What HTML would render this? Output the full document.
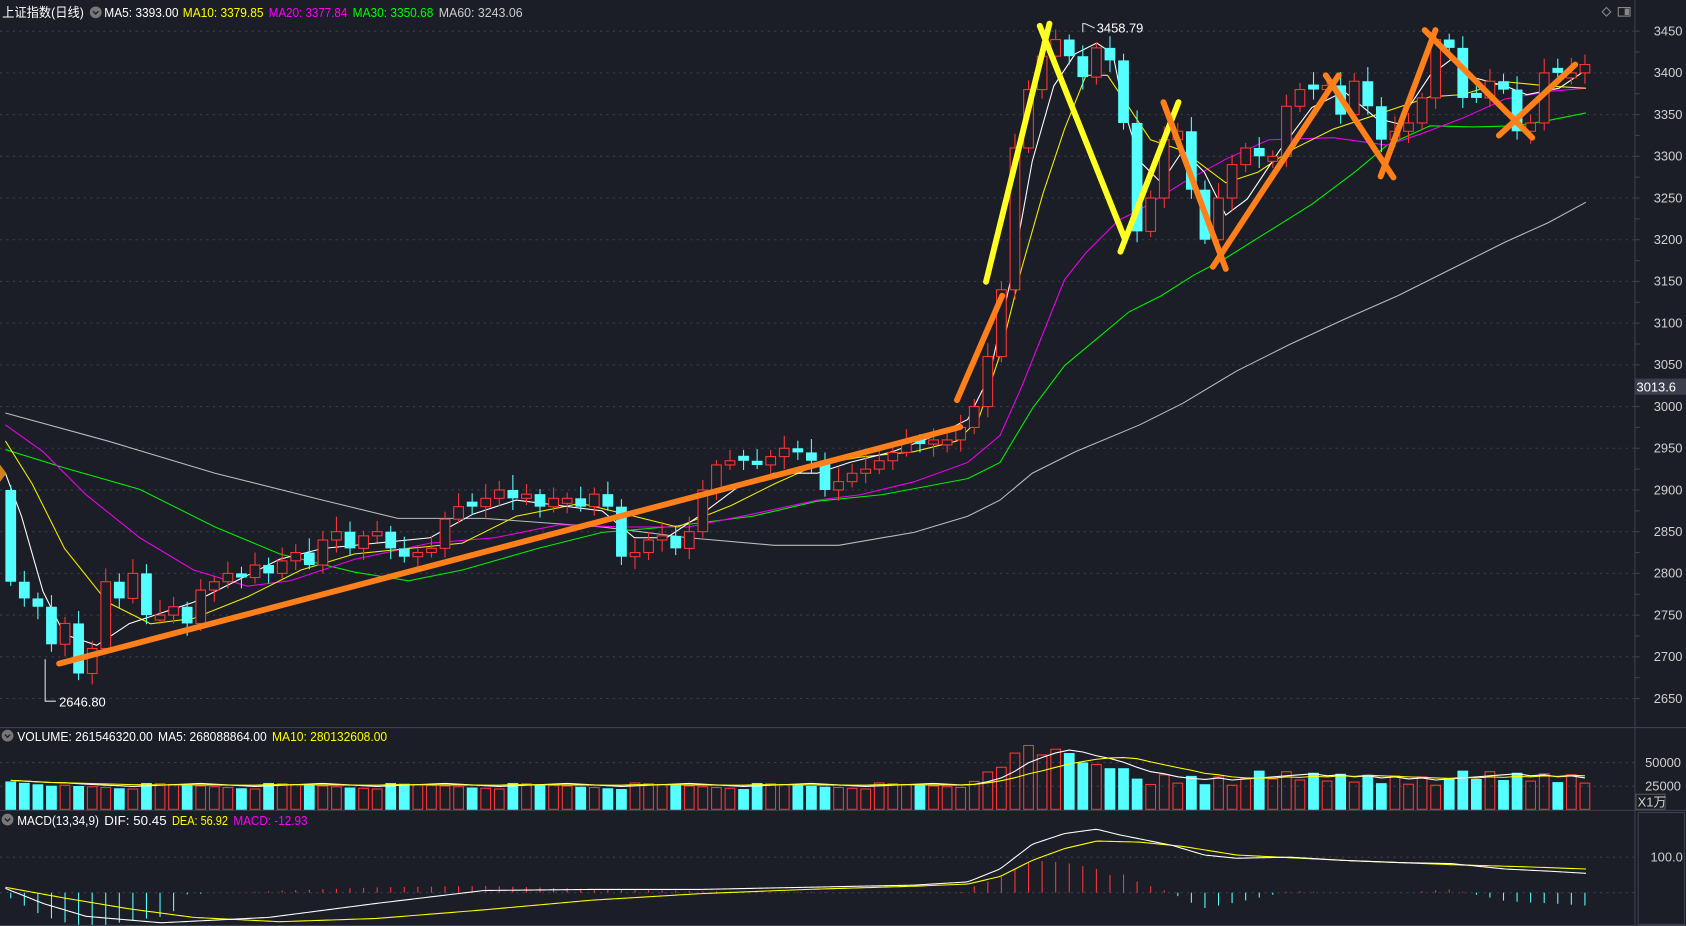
<!DOCTYPE html>
<html><head><meta charset="utf-8"><style>
html,body{margin:0;padding:0;background:#1b1e26;overflow:hidden}
svg{display:block}
text{font-family:"Liberation Sans","Noto Sans CJK SC",sans-serif;font-size:12px}
</style></head><body>
<svg id="s" width="1686" height="926" viewBox="0 0 1568 861" preserveAspectRatio="none" xmlns="http://www.w3.org/2000/svg">
<rect width="1568" height="861" fill="#1b1e26"/>
<g id="grid" stroke="#3a3f4a" stroke-dasharray="2,4" stroke-width="1"></g>
<g id="ma"></g>
<g id="candles"></g>
<g id="vol"></g>
<g id="macd"></g>
<line x1="0" y1="676.5" x2="1568" y2="676.5" stroke="#3c4150"/>
<line x1="0" y1="753.5" x2="1568" y2="753.5" stroke="#3c4150"/>
<line x1="1520.5" y1="0" x2="1520.5" y2="861" stroke="#3c4150"/>
<line x1="0" y1="860.5" x2="1568" y2="860.5" stroke="#3c4150"/>
<rect x="1523.5" y="755.5" width="43" height="104" fill="none" stroke="#3c4150"/>
<g id="ticks" stroke="#3c4150"></g>
<text x="2" y="16" fill="#fff" textLength="76" lengthAdjust="spacingAndGlyphs">上证指数(日线)</text>
<circle cx="89" cy="11.5" r="5.5" fill="#777"/><path d="M86.5 10.5l2.5 2.5 2.5-2.5" stroke="#222" fill="none" stroke-width="1.3"/>
<text x="97" y="16" fill="#fff" textLength="69" lengthAdjust="spacingAndGlyphs">MA5: 3393.00</text>
<text x="170" y="16" fill="#ffff00" textLength="75" lengthAdjust="spacingAndGlyphs">MA10: 3379.85</text>
<text x="250" y="16" fill="#ff00ff" textLength="73" lengthAdjust="spacingAndGlyphs">MA20: 3377.84</text>
<text x="328" y="16" fill="#00ff00" textLength="75" lengthAdjust="spacingAndGlyphs">MA30: 3350.68</text>
<text x="408" y="16" fill="#cccccc" textLength="78" lengthAdjust="spacingAndGlyphs">MA60: 3243.06</text>
<path d="M1490 11l4-4 4 4-4 4z" fill="none" stroke="#888"/>
<rect x="1505" y="7" width="11" height="8" fill="none" stroke="#888"/><rect x="1511" y="8" width="4" height="6" fill="#888"/>
<g id="axis" fill="#d0d0d0"></g>
<rect x="1520" y="352" width="48" height="15" fill="#3a3f4b"/>
<text x="1522" y="364" fill="#fff">3013.6</text>
<text x="55" y="657" fill="#fff">2646.80</text>
<path d="M42 613v39h10" stroke="#ddd" fill="none"/>
<text x="1020" y="30" fill="#fff">3458.79</text>
<path d="M1007 30v-8h2M1009 22l9 4" stroke="#ddd" fill="none"/>
<circle cx="7" cy="684" r="5.5" fill="#777"/><path d="M4.5 683l2.5 2.5 2.5-2.5" stroke="#222" fill="none" stroke-width="1.3"/>
<text x="16" y="689" fill="#fff" textLength="126" lengthAdjust="spacingAndGlyphs">VOLUME: 261546320.00</text>
<text x="147" y="689" fill="#fff" textLength="101" lengthAdjust="spacingAndGlyphs">MA5: 268088864.00</text>
<text x="253" y="689" fill="#ffff00" textLength="107" lengthAdjust="spacingAndGlyphs">MA10: 280132608.00</text>
<text x="1530" y="713" fill="#d0d0d0">50000</text>
<text x="1530" y="735" fill="#d0d0d0">25000</text>
<rect x="1521.5" y="738.5" width="27" height="14" fill="none" stroke="#555"/>
<text x="1523" y="750" fill="#d0d0d0">X1万</text>
<circle cx="7" cy="762" r="5.5" fill="#777"/><path d="M4.5 761l2.5 2.5 2.5-2.5" stroke="#222" fill="none" stroke-width="1.3"/>
<text x="16" y="767" fill="#fff" textLength="76" lengthAdjust="spacingAndGlyphs">MACD(13,34,9)</text>
<text x="97" y="767" fill="#fff" textLength="58" lengthAdjust="spacingAndGlyphs">DIF: 50.45</text>
<text x="160" y="767" fill="#ffff00" textLength="52" lengthAdjust="spacingAndGlyphs">DEA: 56.92</text>
<text x="217" y="767" fill="#ff00ff" textLength="69" lengthAdjust="spacingAndGlyphs">MACD: -12.93</text>
<text x="1535" y="801" fill="#d0d0d0">100.0</text>
<g id="ann" stroke-linecap="round" stroke-width="5.5" fill="none"></g>
<path d="M0 432l6 8-6 8z" fill="#d08020"/>
</svg>
<script>
var NS="http://www.w3.org/2000/svg";
function el(p,t,a){var e=document.createElementNS(NS,t);for(var k in a)e.setAttribute(k,a[k]);document.getElementById(p).appendChild(e);return e;}
function Y(p){return 29+(3450-p)*0.7756;}
for(var p=2650;p<=3450;p+=50){var y=Y(p);el('grid','line',{x1:0,x2:1520,y1:y,y2:y});el('axis','text',{x:1538,y:y+4}).textContent=p;}
[709,731,797,830].forEach(function(y){el('grid','line',{x1:0,x2:1520,y1:y,y2:y});});
for(var p=2650;p<=3450;p+=25){var y=Y(p);el('ticks','line',{x1:1520,x2:1525,y1:y,y2:y});}
function poly(pts,c,g){el(g||'ma','polyline',{points:pts.map(function(a){return a.join(',')}).join(' '),stroke:c,fill:'none','stroke-width':1});}
poly([[5,384],[100,410],[200,440],[300,465],[370,482],[450,482],[560,490],[640,500],[720,507],[780,507],[850,495],[900,480],[930,465],[960,440],[1000,420],[1060,395],[1100,375],[1150,345],[1200,320],[1250,297],[1300,275],[1350,250],[1400,225],[1440,207],[1475,188]],'#bbbbbb');
poly([[5,418],[60,435],[130,455],[200,490],[260,515],[330,532],[380,540],[430,530],[500,510],[560,495],[620,490],[700,480],[760,466],[820,460],[900,445],[930,430],[960,380],[990,340],[1020,315],[1050,290],[1080,275],[1110,256],[1140,240],[1180,215],[1220,190],[1260,160],[1290,135],[1330,117],[1370,118],[1410,117],[1440,112],[1475,105]],'#00ee00');
poly([[5,395],[40,420],[80,460],[130,500],[180,530],[230,545],[270,540],[330,520],[400,505],[460,500],[520,488],[580,490],[640,490],[700,478],[760,465],[800,460],[850,448],[900,430],[930,405],[950,360],[970,310],[990,260],[1010,235],[1030,215],[1040,205],[1060,195],[1100,170],[1140,148],[1180,130],[1240,128],[1290,135],[1320,125],[1360,110],[1400,92],[1440,85],[1475,82]],'#ee00ee');
poly([[5,410],[30,450],[60,510],[100,560],[140,580],[180,575],[230,555],[280,530],[330,515],[380,510],[430,505],[480,480],[540,468],[590,480],[630,490],[680,470],[720,450],[760,432],[800,425],[850,420],[890,410],[910,390],[930,330],[950,250],[970,180],[990,120],[1010,70],[1030,70],[1050,100],[1070,130],[1100,140],[1140,170],[1170,160],[1200,140],[1240,120],[1270,110],[1300,100],[1330,90],[1360,88],[1400,76],[1440,80],[1475,82]],'#eeee00');
poly([[5,440],[20,480],[40,550],[60,590],[90,600],[120,580],[150,570],[180,560],[220,540],[260,520],[300,510],[350,505],[400,500],[440,478],[480,465],[520,470],[560,475],[590,500],[620,500],[650,480],[690,450],[720,440],[760,440],[790,430],[830,420],[870,405],[900,390],[920,350],[940,260],[960,150],[980,80],[1000,50],[1020,40],[1035,50],[1045,100],[1060,150],[1080,170],[1100,140],[1120,160],[1140,200],[1160,185],[1190,140],[1220,100],[1250,85],[1280,110],[1300,115],[1330,70],[1350,55],[1370,72],[1400,80],[1420,88],[1450,82],[1475,65]],'#ffffff');
var C=[2790,2770,2760,2715,2740,2680,2710,2790,2770,2800,2750,2750,2760,2740,2780,2790,2800,2795,2810,2800,2815,2825,2810,2840,2850,2830,2845,2850,2830,2820,2825,2830,2865,2880,2880,2890,2900,2890,2895,2880,2890,2890,2880,2895,2880,2820,2825,2840,2845,2830,2850,2900,2930,2935,2935,2930,2940,2950,2945,2935,2900,2910,2920,2925,2935,2945,2960,2955,2960,2960,2975,3000,3060,3140,3310,3380,3420,3440,3420,3395,3430,3415,3340,3210,3250,3320,3330,3260,3200,3250,3290,3310,3300,3300,3360,3380,3380,3385,3350,3390,3360,3320,3330,3340,3370,3440,3430,3370,3370,3390,3380,3330,3340,3400,3400,3400,3410];
var n=C.length,sp=1464/(n-1),prev=2900,vols=[];
var volSpike={71:30000,72:40000,73:45000,74:60000,75:68000,76:58000,77:64000,78:60000,79:50000,80:48000,81:44000,82:44000,83:33000};
for(var i=0;i<n;i++){var x=10+i*sp,o=prev,c=C[i];if(Math.abs(o-c)<3){o=c+((i%2)?-6:6);}
 var up=c>o,hi=Math.max(o,c)+6+(i*7%13),lo=Math.min(o,c)-5-(i*5%11);
 var col=up?'#ff3535':'#55ffff';
 el('candles','line',{x1:x,x2:x,y1:Y(hi),y2:Y(lo),stroke:col});
 var t=Y(Math.max(o,c)),b=Y(Math.min(o,c));
 if(up)el('candles','rect',{x:x-4.5,y:t,width:9,height:Math.max(b-t,1),fill:'#1b1e26',stroke:col});
 else el('candles','rect',{x:x-5,y:t,width:10,height:Math.max(b-t,1.5),fill:col});
 var v=volSpike[i]||(i<4?30000-i*1500:(i>84?26000+((i*37)%15)*1100:22000+((i*53)%9)*800));
 vols.push(v);var vy=753-v*22/25000;
 if(up)el('vol','rect',{x:x-4.5,y:vy,width:9,height:752.5-vy,fill:'none',stroke:col});
 else el('vol','rect',{x:x-5,y:vy,width:10,height:753-vy,fill:col});
 prev=c;}
function maV(k){var pts=[];for(var i=0;i<n;i++){var s=0,m=0;for(var j=Math.max(0,i-k+1);j<=i;j++){s+=vols[j];m++;}pts.push([10+i*sp,753-(s/m)*22/25000-1]);}return pts;}
poly(maV(5),'#ffffff','vol');poly(maV(10),'#ffff00','vol');
function interp(pts,x){for(var i=1;i<pts.length;i++){if(x<=pts[i][0]){var a=pts[i-1],b=pts[i],t=(x-a[0])/(b[0]-a[0]);return a[1]+t*(b[1]-a[1]);}}return pts[pts.length-1][1];}
var DIF=[[5,826],[40,840],[80,852],[150,858],[250,853],[350,840],[450,828],[550,827],[650,827],[750,825],[850,823],[900,820],[930,808],[960,785],[990,775],[1020,771],[1040,776],[1060,780],[1090,786],[1120,795],[1150,798],[1200,797],[1250,800],[1300,802],[1350,803],[1400,808],[1440,810],[1475,812]];
var DEA=[[5,825],[60,835],[120,845],[180,853],[260,857],[350,854],[450,846],[550,837],[650,831],[750,827],[850,824],[900,822],[930,815],[960,800],[990,789],[1020,782],[1060,783],[1100,787],[1150,795],[1250,800],[1350,804],[1420,806],[1475,808]];
var d1=[],d2=[];for(var x=5;x<=1475;x+=3){d1.push([x,interp(DIF,x)]);d2.push([x,interp(DEA,x)]);}
for(var i=0;i<n;i++){var x=10+i*sp,g=interp(DEA,x)-interp(DIF,x),h;
 if(x<170)h=g*2.5;else if(x<900)h=g*0.35;else if(x<1040)h=g*2;else h=g*3;
 if(Math.abs(h)<0.6)continue;el('macd','line',{x1:x,x2:x,y1:830,y2:830-h,stroke:h>0?'#ff3535':'#55ffff'});}
poly(d2,'#ffff00','macd');poly(d1,'#ffffff','macd');
var O='#ff7f1a',Yl='#ffff22';
[[O,55,617,893,397],[O,890,372,932,275],[Yl,917,262,976,22],[Yl,967,24,1046,222],[Yl,1042,234,1096,95],
 [O,1082,95,1140,250],[O,1128,248,1245,70],[O,1233,70,1296,165],[O,1284,164,1335,28],[O,1325,28,1425,128],[O,1394,126,1465,60]].forEach(function(a){el('ann','line',{x1:a[1],y1:a[2],x2:a[3],y2:a[4],stroke:a[0]});});
</script>
</body></html>
